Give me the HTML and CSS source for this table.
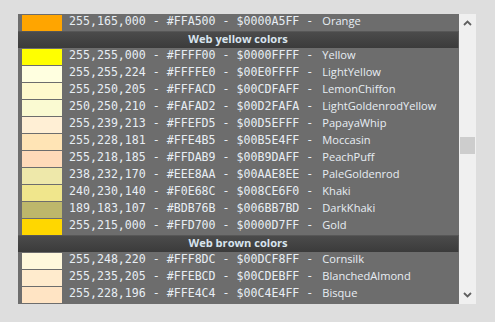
FILE: index.html
```html
<!DOCTYPE html>
<html>
<head>
<meta charset="utf-8">
<link rel="stylesheet" href="styles.css">
</head>
<body>
<div class="frame">
  <div class="list">
    <div class="row"><span class="sw" style="background:#FFA500"></span><span class="code">255,165,000 - #FFA500 - $0000A5FF - </span><span class="name">Orange</span></div>
    <div class="head">Web yellow colors</div>
    <div class="row"><span class="sw" style="background:#FFFF00"></span><span class="code">255,255,000 - #FFFF00 - $0000FFFF - </span><span class="name">Yellow</span></div>
    <div class="row"><span class="sw" style="background:#FFFFE0"></span><span class="code">255,255,224 - #FFFFE0 - $00E0FFFF - </span><span class="name">LightYellow</span></div>
    <div class="row"><span class="sw" style="background:#FFFACD"></span><span class="code">255,250,205 - #FFFACD - $00CDFAFF - </span><span class="name">LemonChiffon</span></div>
    <div class="row"><span class="sw" style="background:#FAFAD2"></span><span class="code">250,250,210 - #FAFAD2 - $00D2FAFA - </span><span class="name">LightGoldenrodYellow</span></div>
    <div class="row"><span class="sw" style="background:#FFEFD5"></span><span class="code">255,239,213 - #FFEFD5 - $00D5EFFF - </span><span class="name">PapayaWhip</span></div>
    <div class="row"><span class="sw" style="background:#FFE4B5"></span><span class="code">255,228,181 - #FFE4B5 - $00B5E4FF - </span><span class="name">Moccasin</span></div>
    <div class="row"><span class="sw" style="background:#FFDAB9"></span><span class="code">255,218,185 - #FFDAB9 - $00B9DAFF - </span><span class="name">PeachPuff</span></div>
    <div class="row"><span class="sw" style="background:#EEE8AA"></span><span class="code">238,232,170 - #EEE8AA - $00AAE8EE - </span><span class="name">PaleGoldenrod</span></div>
    <div class="row"><span class="sw" style="background:#F0E68C"></span><span class="code">240,230,140 - #F0E68C - $008CE6F0 - </span><span class="name">Khaki</span></div>
    <div class="row"><span class="sw" style="background:#BDB76B"></span><span class="code">189,183,107 - #BDB76B - $006BB7BD - </span><span class="name">DarkKhaki</span></div>
    <div class="row"><span class="sw" style="background:#FFD700"></span><span class="code">255,215,000 - #FFD700 - $0000D7FF - </span><span class="name">Gold</span></div>
    <div class="head">Web brown colors</div>
    <div class="row"><span class="sw" style="background:#FFF8DC"></span><span class="code">255,248,220 - #FFF8DC - $00DCF8FF - </span><span class="name">Cornsilk</span></div>
    <div class="row"><span class="sw" style="background:#FFEBCD"></span><span class="code">255,235,205 - #FFEBCD - $00CDEBFF - </span><span class="name">BlanchedAlmond</span></div>
    <div class="row"><span class="sw" style="background:#FFE4C4"></span><span class="code">255,228,196 - #FFE4C4 - $00C4E4FF - </span><span class="name">Bisque</span></div>
  </div>
  <div class="scroll">
    <svg class="arrow" width="9" height="6" viewBox="0 0 9 6"><path d="M1 5 L4.5 1.5 L8 5" fill="none" stroke="#606060" stroke-width="1.8"/></svg>
    <div class="track"><div class="thumb"></div></div>
    <svg class="arrow" width="9" height="6" viewBox="0 0 9 6"><path d="M1 1 L4.5 4.5 L8 1" fill="none" stroke="#606060" stroke-width="1.8"/></svg>
  </div>
</div>
</body>
</html>
```
FILE: styles.css
```css
html, body {
  margin: 0;
  padding: 0;
  background: #dedede;
}
body {
  padding: 14px 0 0 18px;
}
.frame {
  display: flex;
  width: 458px;
  height: 290px;
}
.list {
  width: 441px;
  background: #6d6d6d;
  display: flex;
  flex-direction: column;
}
.row {
  height: 17px;
  display: flex;
  align-items: flex-start;
  color: #e8eef4;
  white-space: pre;
}
.sw {
  width: 40px;
  height: 16px;
  margin: 1px 7px 0 4px;
  flex: none;
}
.code {
  font-family: "DejaVu Sans Mono", monospace;
  font-size: 11.6px;
  line-height: 15px;
}
.name {
  font-family: "Open Sans", sans-serif;
  font-size: 11.1px;
  line-height: 13px;
  margin-left: 2px;
}
.head {
  height: 17px;
  box-sizing: border-box;
  background: linear-gradient(#4b4b4b, #3b3b3b);
  border-top: 1px solid #575757;
  border-right: 1px solid #5a5a5a;
  color: #d8e4ee;
  font-family: "Open Sans", sans-serif;
  font-weight: bold;
  font-size: 11.1px;
  line-height: 14px;
  text-align: center;
}
.scroll {
  width: 17px;
  background: #f0f0f0;
  display: flex;
  flex-direction: column;
  align-items: center;
}
.arrow {
  flex: none;
  margin: 6px 0;
}
.track {
  flex: 1;
  width: 100%;
  padding-top: 105px;
}
.thumb {
  width: 15px;
  height: 17px;
  margin-left: 1px;
  background: #cdcdcd;
}
```
